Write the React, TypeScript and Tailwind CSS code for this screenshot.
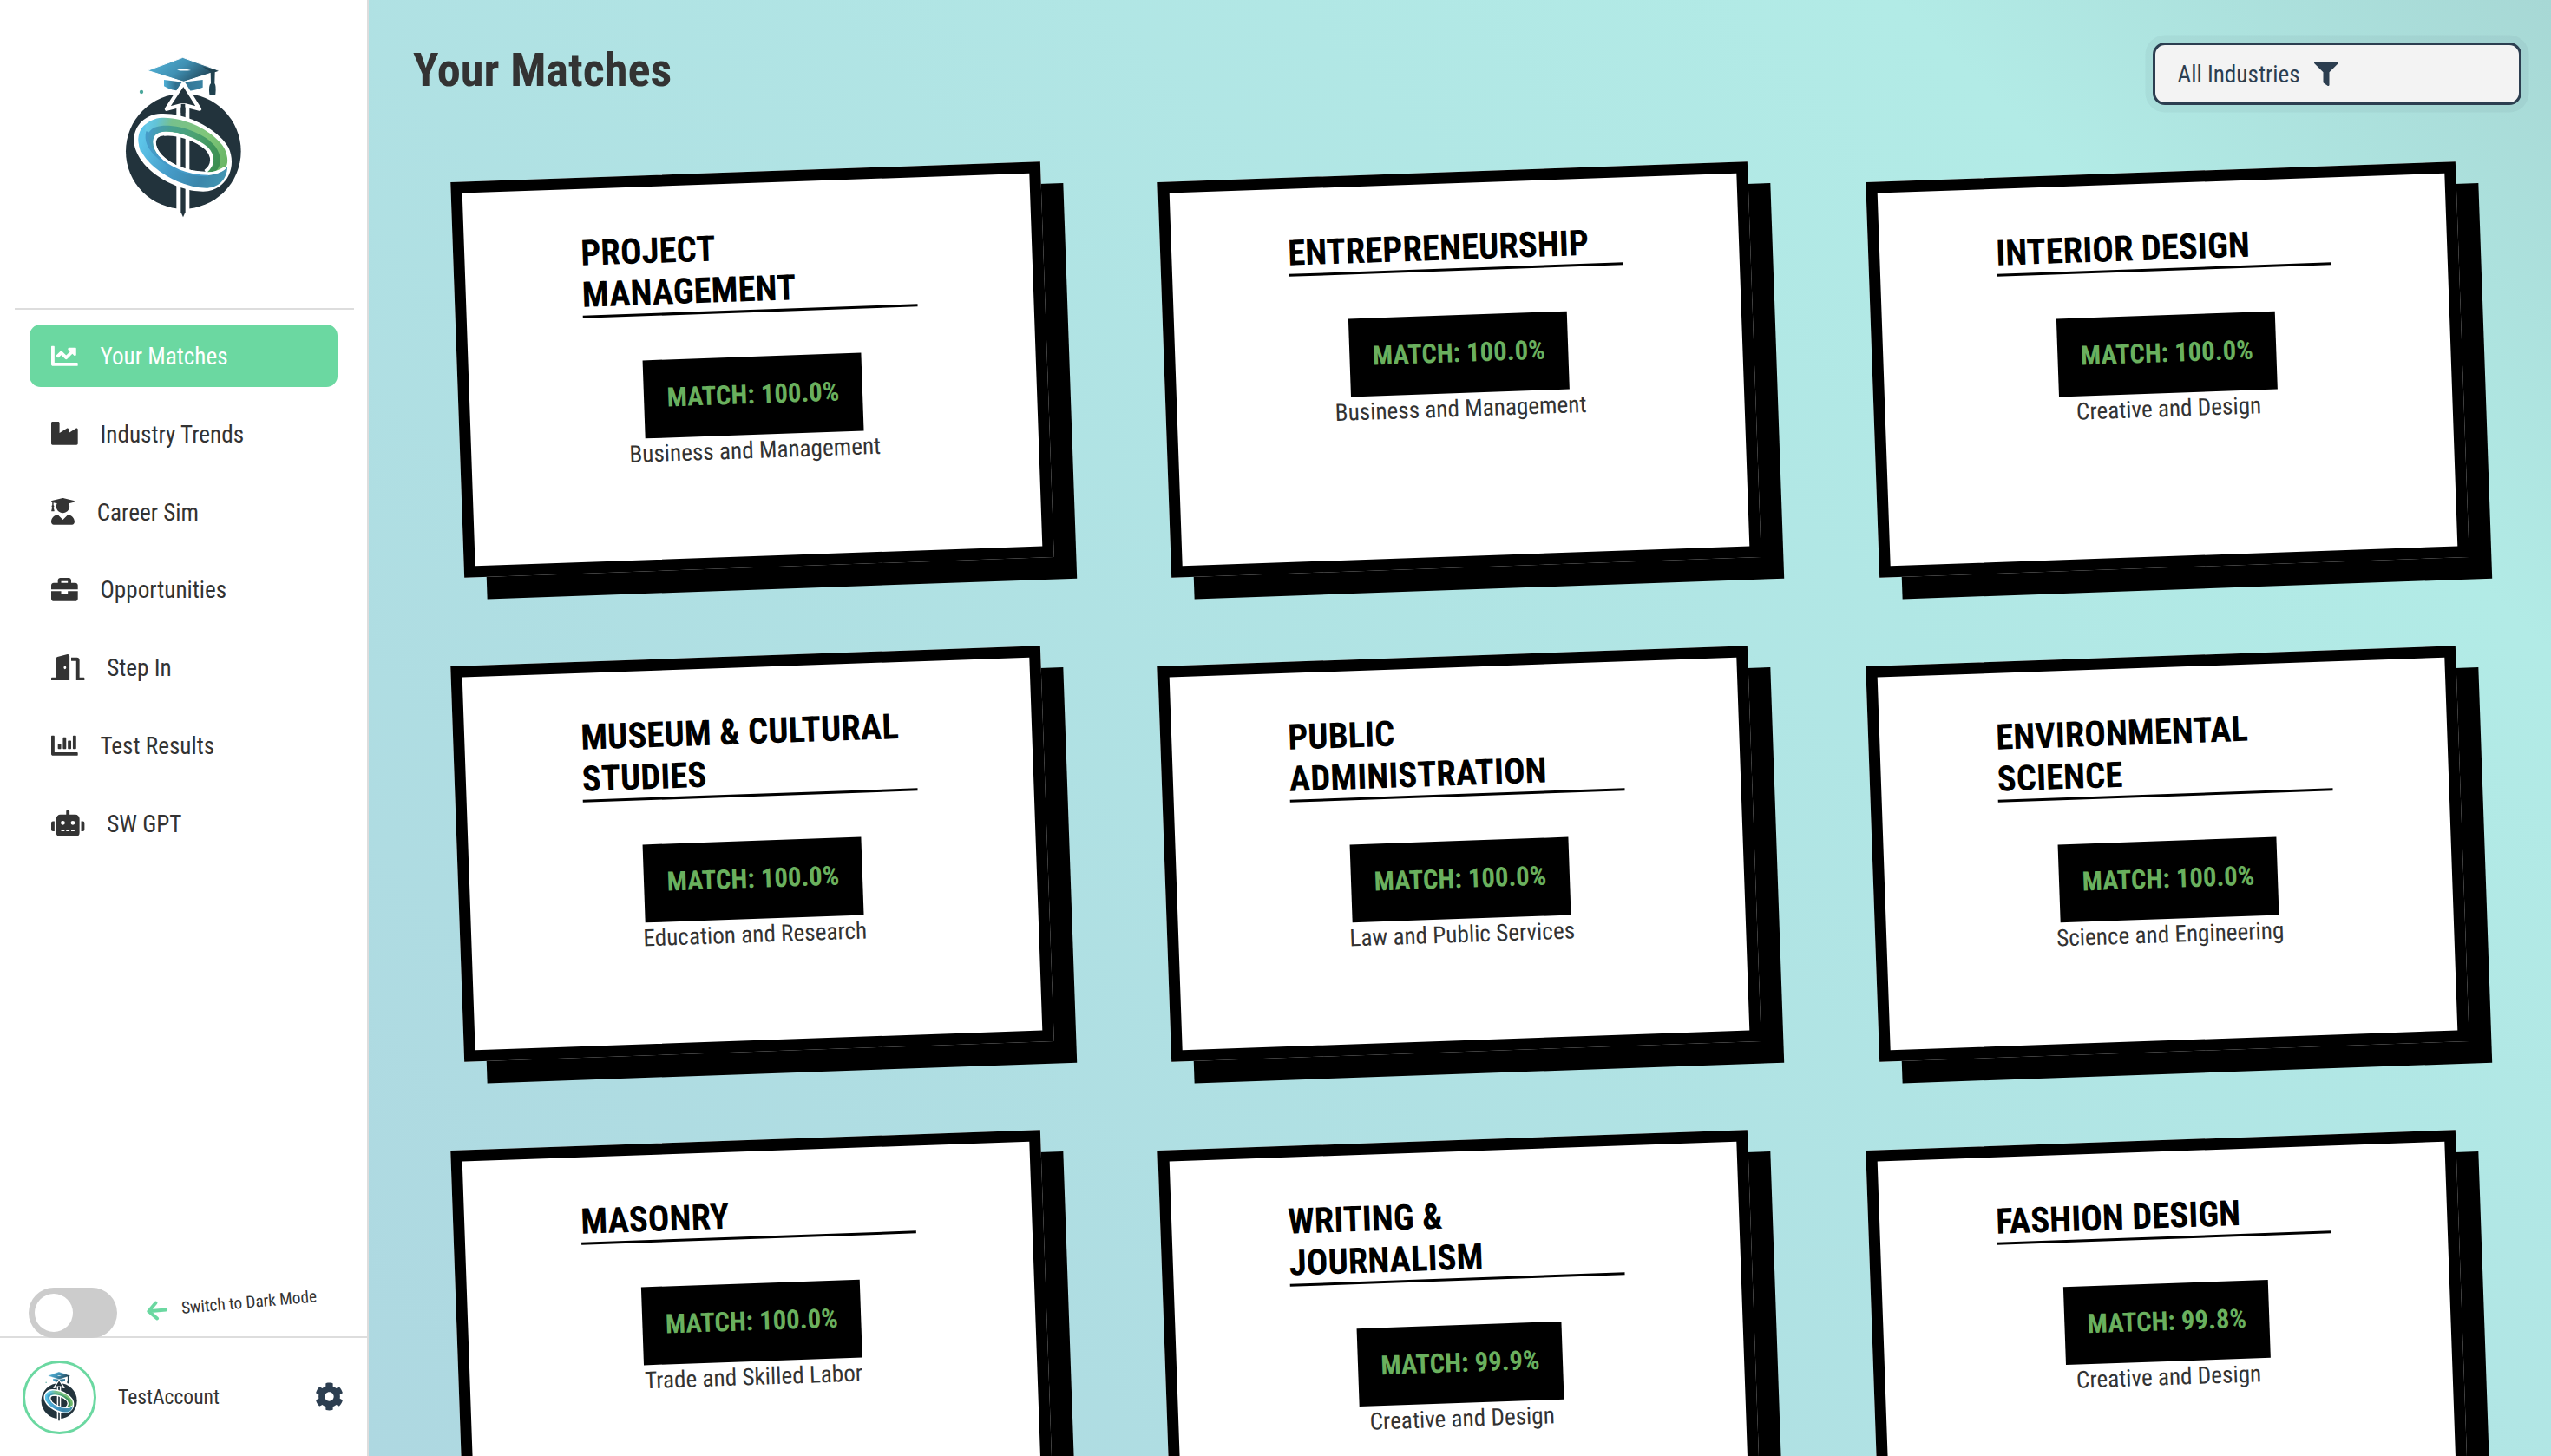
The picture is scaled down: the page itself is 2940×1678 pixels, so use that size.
import type { ReactNode } from "react";
import {
  FaBriefcase,
  FaChartBar,
  FaChartLine,
  FaCog,
  FaDoorOpen,
  FaFilter,
  FaIndustry,
  FaRobot,
  FaUserGraduate,
} from "react-icons/fa";

const nav: { label: string; icon: ReactNode; active?: boolean }[] = [
  { label: "Your Matches", icon: <FaChartLine className="h-[30.7px] w-[30.7px] shrink-0" />, active: true },
  { label: "Industry Trends", icon: <FaIndustry className="h-[30.7px] w-[30.7px] shrink-0" /> },
  { label: "Career Sim", icon: <FaUserGraduate className="h-[30.7px] w-[26.9px] shrink-0" /> },
  { label: "Opportunities", icon: <FaBriefcase className="h-[30.7px] w-[30.7px] shrink-0" /> },
  { label: "Step In", icon: <FaDoorOpen className="h-[30.7px] w-[38.4px] shrink-0" /> },
  { label: "Test Results", icon: <FaChartBar className="h-[30.7px] w-[30.7px] shrink-0" /> },
  { label: "SW GPT", icon: <FaRobot className="h-[30.7px] w-[38.4px] shrink-0" /> },
];

const matches = [
  { title: "Project Management", score: "100.0%", field: "Business and Management" },
  { title: "Entrepreneurship", score: "100.0%", field: "Business and Management" },
  { title: "Interior Design", score: "100.0%", field: "Creative and Design" },
  { title: "Museum & Cultural Studies", score: "100.0%", field: "Education and Research" },
  { title: "Public Administration", score: "100.0%", field: "Law and Public Services" },
  { title: "Environmental Science", score: "100.0%", field: "Science and Engineering" },
  { title: "Masonry", score: "100.0%", field: "Trade and Skilled Labor" },
  { title: "Writing & Journalism", score: "99.9%", field: "Creative and Design" },
  { title: "Fashion Design", score: "99.8%", field: "Creative and Design" },
];

function Logo({ id, className }: { id: string; className: string }) {
  return (
    <svg viewBox="0 0 450 600" className={className} aria-hidden="true">
      <defs>
        <linearGradient id={`${id}-cap`} x1="0" y1="0" x2="1" y2="0.4">
          <stop offset="0" stopColor="#55b9de" />
          <stop offset="0.55" stopColor="#4090b3" />
          <stop offset="1" stopColor="#22495c" />
        </linearGradient>
        <linearGradient id={`${id}-base`} x1="0" y1="0" x2="1" y2="0">
          <stop offset="0" stopColor="#4fb0d6" />
          <stop offset="0.3" stopColor="#2f6f8e" />
          <stop offset="1" stopColor="#3a83a3" />
        </linearGradient>
        <linearGradient id={`${id}-green`} gradientUnits="userSpaceOnUse" x1="60" y1="290" x2="370" y2="380">
          <stop offset="0" stopColor="#68cdee" />
          <stop offset="0.14" stopColor="#62c3d8" />
          <stop offset="0.3" stopColor="#77c08c" />
          <stop offset="0.7" stopColor="#80c67a" />
          <stop offset="1" stopColor="#68b565" />
        </linearGradient>
        <linearGradient id={`${id}-inner`} gradientUnits="userSpaceOnUse" x1="85" y1="290" x2="340" y2="370">
          <stop offset="0" stopColor="#459bcb" />
          <stop offset="0.3" stopColor="#47a08d" />
          <stop offset="0.6" stopColor="#4ba172" />
          <stop offset="1" stopColor="#3b8f50" />
        </linearGradient>
        <linearGradient id={`${id}-blue`} gradientUnits="userSpaceOnUse" x1="70" y1="310" x2="360" y2="440">
          <stop offset="0" stopColor="#5cc4e8" />
          <stop offset="0.4" stopColor="#459bc8" />
          <stop offset="0.75" stopColor="#3b86ab" />
          <stop offset="1" stopColor="#4396b2" />
        </linearGradient>
      </defs>
      <circle cx="69" cy="138" r="6.5" fill="#4aa79b" />
      <circle cx="214" cy="343" r="199" fill="#22333c" />
      {/* graduation cap */}
      <path d="M147 96 L212 104 L281 96 V122 Q250 135 214 136 Q172 134 147 118 Z" fill={`url(#${id}-base)`} />
      <path d="M90 64 L212 19 L337 64 L215 103 Z" fill={`url(#${id}-cap)`} stroke="#fff" strokeWidth="3" />
      <path d="M192 62 Q210 55 240 63 Q214 67 192 62 Z" fill="#fff" />
      <path d="M280 50 L336 65 L323 70 L322 108 Q328 116 325 146 Q314 153 304 146 Q300 116 309 108 L308 68 Z" fill="#20414f" />
      {/* arrow */}
      <path d="M190 190 H235 V545 H190 Z" fill="#fff" />
      <path d="M205 190 H221 V553 L213 571 L205 553 Z" fill="#22333c" />
      <path d="M214 108 L270 197 L221 184 H205 L156 197 Z" fill="#22333c" stroke="#fff" strokeWidth="13" strokeLinejoin="round" />
      <path d="M206 180 H220 V210 H206 Z" fill="#22333c" />
      {/* ring */}
      <path
        fillRule="evenodd"
        d="M135 213 C225 209 333 265 370 330 C398 390 372 465 300 481 C195 492 40 400 43 300 C46 250 85 216 135 213 Z M147 289 C108 292 113 325 137 353 C163 384 215 410 290 413 C323 385 312 356 288 335 C255 305 195 283 147 289 Z"
        fill="#fff"
      />
      <path
        d="M140 227 C225 224 325 277 357 335 C376 378 366 412 330 418 L288 418 C331 395 332 357 301 331 C262 296 190 269 139 276 C102 281 100 312 122 345 L66 345 C45 285 76 231 140 227 Z"
        fill={`url(#${id}-green)`}
      />
      <path
        d="M139 255 C205 250 290 283 325 327 C349 362 346 396 324 413 L290 416 C328 386 318 356 291 331 C256 299 195 270 146 275 C104 279 99 313 128 352 L100 362 C72 310 84 259 139 255 Z"
        fill={`url(#${id}-inner)`}
      />
      <path
        d="M58 300 C60 280 66 262 84 250 C76 295 95 335 131 366 C180 410 240 427 300 425 C330 425 352 413 366 396 C366 440 335 468 298 470 C200 473 56 385 58 300 Z"
        fill={`url(#${id}-blue)`}
      />
      <path d="M90 275 C82 305 98 338 131 366 C180 408 240 425 300 425" fill="none" stroke="#459bc8" strokeWidth="10" />
      <path
        d="M147 283 C104 287 108 325 133 356 C170 395 230 419 300 420 C318 420 342 412 355 402"
        fill="none"
        stroke="#fff"
        strokeWidth="10"
        strokeLinecap="round"
      />
      <path d="M147 284 C196 279 258 302 294 333 C318 358 320 390 290 413" fill="none" stroke="#fff" strokeWidth="12" />
    </svg>
  );
}

function MatchCard({ title, score, field }: { title: string; score: string; field: string }) {
  return (
    <article className="flex h-[456px] w-[680px] -rotate-2 flex-col items-center border-[13px] border-black bg-white pt-[50.4px] shadow-[25.6px_25.6px_0_#000]">
      <h2 className="w-[386px] border-b-[3px] border-black text-[40.8px] leading-[48px] font-bold text-black uppercase">
        {title}
      </h2>
      <div className="mt-[50.6px] flex h-[89.6px] items-center bg-black px-[26.5px] pb-[1px] text-[30.72px] font-bold whitespace-nowrap text-[#6ab05e]">
        MATCH: {score}
      </div>
      <p className="mt-[1.5px] text-[27.2px] leading-[34px] text-[#333]">{field}</p>
    </article>
  );
}

export default function App() {
  return (
    <div className="flex h-[1678px] w-[2940px] overflow-hidden bg-white font-['Roboto_Condensed','Roboto',sans-serif] text-[#333]">
      <aside className="flex h-full w-[425px] shrink-0 flex-col border-r-2 border-[#ddd] bg-white">
        <div className="ml-[17px] flex h-[357px] w-[391px] shrink-0 justify-center border-b-2 border-[#ddd] pt-[60px]">
          <Logo id="brand" className="mr-[-4px] h-[200px] w-[150px]" />
        </div>
        <nav className="mt-[17px] flex flex-col gap-[18px] px-[34px]">
          {nav.map((item) => (
            <a
              key={item.label}
              className={
                item.active
                  ? "flex h-[71.8px] items-center gap-[25.4px] rounded-[12.8px] bg-[#6bd8a1] pl-[25.4px] text-[27.2px] text-white"
                  : "flex h-[71.8px] items-center gap-[25.4px] rounded-[12.8px] pl-[25.4px] text-[27.2px]"
              }
            >
              {item.icon}
              <span className="pt-[3px]">{item.label}</span>
            </a>
          ))}
        </nav>
        <div className="relative z-10 mt-auto -mb-[2px] flex h-[58px] shrink-0 items-center pl-[33px]">
          <div className="flex h-[57.6px] w-[102px] items-center rounded-full bg-[#ccc] pl-[7px]">
            <div className="size-[44px] rounded-full bg-white" />
          </div>
          <div className="mb-[20px] ml-[32px] flex -rotate-5 items-center gap-[16px]">
            <svg viewBox="0 0 26 26" className="size-[26px]" fill="none" stroke="#6bd8a1" strokeWidth="4" strokeLinecap="round" strokeLinejoin="round">
              <path d="M13 4 L4 13 L13 22 M4 13 H24" />
            </svg>
            <span className="text-[19.2px] whitespace-nowrap">Switch to Dark Mode</span>
          </div>
        </div>
        <div className="flex h-[138px] shrink-0 items-center border-t-2 border-[#ddd] pl-[26px]">
          <div className="flex size-[85px] shrink-0 justify-center rounded-full border-[3px] border-[#6bd8a1] bg-white pt-[8px]">
            <Logo id="avatar" className="mr-[-2px] h-[62px] w-[46.5px]" />
          </div>
          <span className="ml-[25px] pt-[1px] text-[23.6px]">TestAccount</span>
          <FaCog className="mr-[27px] mb-[2px] ml-auto size-[33px] text-[#2c3e50]" />
        </div>
      </aside>

      <main className="flex h-full grow flex-col overflow-hidden bg-[linear-gradient(45deg,#aed8e1_0%,#b2ebe6_82%,#a7d8d5_100%)]">
        <header className="flex h-[197.7px] shrink-0 items-start justify-between pt-[49px] pr-[34px] pl-[51px]">
          <h1 className="text-[54.4px] leading-[63px] font-bold">Your Matches</h1>
          <button className="flex h-[72px] w-[425px] items-center rounded-[14px] border-[3px] border-[#2c3e50] bg-[#f3f3f3] pl-[25.5px] text-[27.2px] text-[#2c3e50] shadow-[0_0_0_8.5px_rgba(44,62,80,0.05)]">
            <span className="pt-[2px]">All Industries</span>
            <FaFilter className="mb-[1px] ml-[16px] size-[28px]" />
          </button>
        </header>
        <section className="ml-[102px] grid grid-cols-[repeat(3,680px)] gap-x-[135.4px] gap-y-[102.1px]">
          {matches.map((m) => (
            <MatchCard key={m.title} {...m} />
          ))}
        </section>
      </main>
    </div>
  );
}
